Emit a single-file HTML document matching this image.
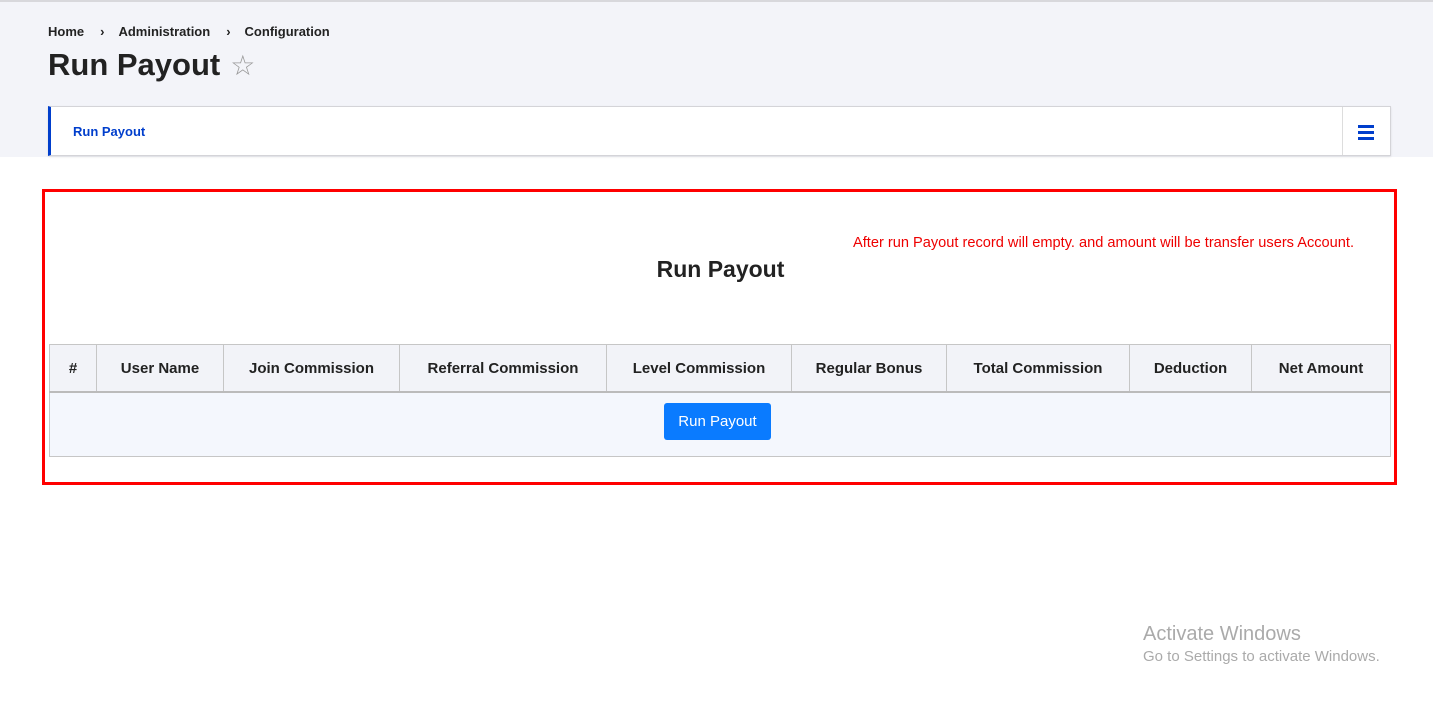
<!DOCTYPE html>
<html><head><style>
body{margin:0;width:1433px;height:707px;background:#fff;font-family:"Liberation Sans",sans-serif;position:relative;overflow:hidden}
.top{position:absolute;left:0;top:0;width:1433px;height:157px;background:#f3f4f9;border-top:2px solid #d8d8dc;box-sizing:border-box}
.bc{position:absolute;top:22px;left:48px;font-size:13px;font-weight:bold;color:#222}
h1{position:absolute;left:48px;top:45px;margin:0;font-size:31px;font-weight:bold;color:#222}
.star{color:#999;font-weight:normal;font-size:28px;margin-left:10px}
.nav{position:absolute;left:48px;top:106px;width:1343px;height:50px;background:#fff;border:1px solid #d4d4d8;border-left:3px solid #003ecc;box-sizing:border-box;box-shadow:0 1px 2px rgba(0,0,0,.1)}
.nav a{position:absolute;left:22px;top:17px;font-size:13px;font-weight:bold;color:#003ecc}
.ham{position:absolute;right:0;top:0;width:47px;height:48px;border-left:1px solid #ddd}
.ham i{position:absolute;left:15px;width:16px;height:2px;background:#003ecc}
.red{position:absolute;left:42px;top:189px;width:1355px;height:296px;border:3px solid #f00;box-sizing:border-box}
.note{position:absolute;left:853px;top:235px;font-size:14.6px;color:#e00;white-space:nowrap}
.ttl{position:absolute;left:0;width:1441px;top:256px;text-align:center;font-size:23px;font-weight:bold;color:#222}
table{position:absolute;left:49px;top:344px;width:1342px;border-collapse:collapse;font-size:15px}
th{height:46px;background:#f2f3f8;border:1px solid #c6c6c6;border-bottom:2px solid #bbb;font-weight:bold;color:#222;padding:0}
td{height:63px;background:#f4f7fd;border:1px solid #c6c6c6;padding:0;position:relative}
.btn{position:absolute;left:614px;top:10px;background:#0a7bff;color:#fff;border-radius:3px;width:107px;height:37px;line-height:37px;font-size:15px;text-align:center}
.win{position:absolute;left:1143px;top:623px;color:#aaa}
</style></head><body>
<div class="top">
<div class="bc"><span>Home</span><span style="margin:0 14px 0 16px">›</span><span>Administration</span><span style="margin:0 14px 0 16px">›</span><span>Configuration</span></div>
<h1>Run Payout<span class="star">☆</span></h1>
</div>
<div class="nav"><a>Run Payout</a><div class="ham"><i style="top:18px;height:3px"></i><i style="top:24px;height:3px"></i><i style="top:30px;height:3px"></i></div></div>
<div class="red"></div>
<div class="note">After run Payout record will empty. and amount will be transfer users Account.</div>
<div class="ttl">Run Payout</div>
<table><tr>
<th style="width:46px">#</th><th style="width:126px">User Name</th><th style="width:175px">Join Commission</th><th style="width:206px">Referral Commission</th><th style="width:184px">Level Commission</th><th style="width:154px">Regular Bonus</th><th style="width:182px">Total Commission</th><th style="width:121px">Deduction</th><th>Net Amount</th>
</tr><tr><td colspan="9"><span class="btn">Run Payout</span></td></tr></table>
<div class="win"><div style="font-size:20px">Activate Windows</div><div style="font-size:15px;margin-top:2px">Go to Settings to activate Windows.</div></div>
</body></html>
